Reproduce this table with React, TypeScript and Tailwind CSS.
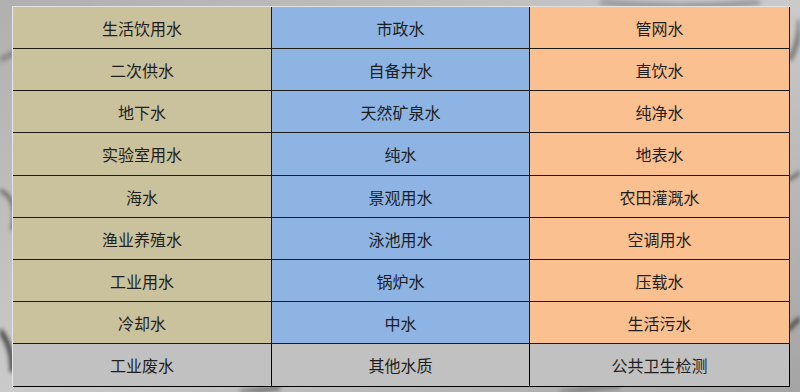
import React from 'react';

type Col = 'tan' | 'blue' | 'orange';

const rows: string[][] = [
  ['生活饮用水', '市政水', '管网水'],
  ['二次供水', '自备井水', '直饮水'],
  ['地下水', '天然矿泉水', '纯净水'],
  ['实验室用水', '纯水', '地表水'],
  ['海水', '景观用水', '农田灌溉水'],
  ['渔业养殖水', '泳池用水', '空调用水'],
  ['工业用水', '锅炉水', '压载水'],
  ['冷却水', '中水', '生活污水'],
  ['工业废水', '其他水质', '公共卫生检测'],
];

const colBg: Record<Col, string> = {
  tan: 'bg-[#c9c29c]',
  blue: 'bg-[#8db4e3]',
  orange: 'bg-[#fbc08f]',
};

const cols: Col[] = ['tan', 'blue', 'orange'];

const App: React.FC = () => {
  return (
    <div className="relative w-[800px] h-[392px] overflow-hidden bg-gradient-to-br from-[#b0b0b0] via-[#cacaca] to-[#a4a4a4]">
      {/* blurred keyboard backdrop */}
      <svg className="absolute inset-0 blur-[2px]" width="800" height="392" viewBox="0 0 800 392">
        <path d="M0 60 Q40 40 90 10" stroke="#8a8a8a" strokeWidth="6" fill="none" />
        <path d="M0 190 Q20 200 12 230" stroke="#555" strokeWidth="3" fill="none" />
        <path d="M0 330 Q14 350 12 372" stroke="#444" strokeWidth="5" fill="none" />
        <path d="M240 392 L280 388" stroke="#666" strokeWidth="4" fill="none" />
        <path d="M560 392 L620 386" stroke="#777" strokeWidth="4" fill="none" />
        <path d="M790 60 Q800 40 800 20" stroke="#777" strokeWidth="5" fill="none" />
        <path d="M788 180 Q796 176 800 172" stroke="#555" strokeWidth="3" fill="none" />
        <path d="M788 330 Q796 322 800 318" stroke="#444" strokeWidth="4" fill="none" />
        <path d="M600 2 Q680 10 760 2" stroke="#999" strokeWidth="6" fill="none" />
      </svg>

      <div className="absolute left-[12px] top-[6px] w-[777px] border-t border-l border-t-[#e2e2e2] border-l-[#e6e6e6] grid grid-cols-[259px_258px_260px] grid-rows-[42px_42px_42px_43px_42px_42px_42px_42px_43px] font-['Microsoft_YaHei','Noto_Sans_CJK_SC',sans-serif] text-[16px] text-[#1e1e1e]">
        {rows.map((row, r) =>
          row.map((label, c) => (
            <div
              key={`${r}-${c}`}
              className={`flex items-center justify-center border-r border-b ${
                r === 8 ? 'bg-[#c1c1c1] border-black' : `${colBg[cols[c]]} border-[#1c1a12]`
              }`}
            >
              {label}
            </div>
          ))
        )}
      </div>
    </div>
  );
};

export default App;
